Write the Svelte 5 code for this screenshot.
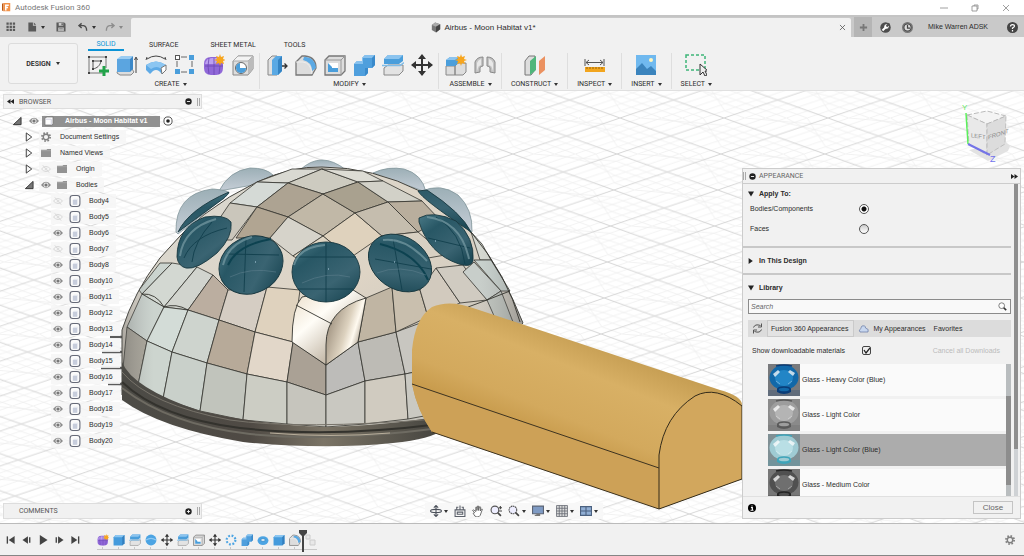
<script>
  const bodies = [
    ['Body4', false], ['Body5', false], ['Body6', true], ['Body7', false], ['Body8', true],
    ['Body10', true], ['Body11', true], ['Body12', true], ['Body13', true], ['Body14', true],
    ['Body15', true], ['Body16', true], ['Body17', true], ['Body18', true], ['Body19', true], ['Body20', true]
  ];
  const tabs = ['SOLID', 'SURFACE', 'SHEET METAL', 'TOOLS'];
  const groups = [
    { label: 'CREATE', icons: ['sketch', 'extrude', 'revolve', 'pattern', 'form', 'hole'] },
    { label: 'MODIFY', icons: ['press', 'fillet', 'shell', 'combine', 'split', 'move'] },
    { label: 'ASSEMBLE', icons: ['component', 'joint'] },
    { label: 'CONSTRUCT', icons: ['plane'], wide: true },
    { label: 'INSPECT', icons: ['measure'], wide: true },
    { label: 'INSERT', icons: ['image'], wide: true },
    { label: 'SELECT', icons: ['select'], wide: true }
  ];
  const history = ['form', 'box', 'split', 'sphere', 'move', 'split', 'shell', 'move', 'circular', 'combine', 'torus', 'box', 'fillet'];
  const playback = ['first', 'back', 'play', 'forward', 'last'];
  const materials = [
    { name: 'Glass - Heavy Color (Blue)', bg: '#77797c', body: '#1268a8', shade: '#0a3d78', light: '#2285c6' },
    { name: 'Glass - Light Color', bg: '#8a8a8a', body: '#9d9d9d', shade: '#5a5a5a', light: '#b4b4b4' },
    { name: 'Glass - Light Color (Blue)', bg: '#7f8f94', body: '#9fcbd3', shade: '#3fa5ba', light: '#b9dfe5', selected: true },
    { name: 'Glass - Medium Color', bg: '#777', body: '#505050', shade: '#252525', light: '#6f6f6f' }
  ];
  let target = $state('bodies');
  let downloadable = $state(true);

  const faces = [
    ['#d9d9d2', '257,182 292,169 322,169 288,183'],
    ['#cdcbc0', '288,183 322,169 358,182 323,194'],
    ['#dddcd4', '322,169 363,171 383,181 358,182'],
    ['#d5dad6', '257,182 288,183 257,207 230,203'],
    ['#ada392', '288,183 323,194 288,217 257,207'],
    ['#c1b8a7', '323,194 355,213 323,236 288,217'],
    ['#a9a18f', '358,182 388,202 355,213 323,194'],
    ['#d2d1c8', '358,182 383,181 422,201 388,202'],
    ['#cac6bb', '257,207 230,203 205,240 232,240'],
    ['#b1a592', '257,207 288,217 270,238 236,238'],
    ['#d6d3ca', '288,217 323,236 293,256 270,238'],
    ['#dfd2bd', '355,213 323,236 350,258 382,236'],
    ['#c5bdae', '388,202 355,213 382,236 418,232'],
    ['#b9ae9d', '388,202 422,201 440,220 418,232'],
    ['#dfd5c3', '323,236 293,256 326,275 350,258'],
    ['#d8d0c2', '418,232 382,236 400,263 445,255'],
    ['#d5d8d1', '471,232 480,260 491,260 482,244'],
    ['#c8d1cd', '491,260 510,291 501,291 474,260'],
    ['#cbd4cf', '160,263 172,263 142,294 139,290'],
    ['#d3d8d2', '172,263 197,267 164,307 142,294'],
    ['#d1d4ce', '197,267 213,275 188,310 164,307'],
    ['#bbaea0', '213,275 228,290 219,320 188,310'],
    ['#d5cdc3', '228,290 267,287 255,332 219,320'],
    ['#dfd2be', '267,287 300,290 293,342 255,332'],
    ['#cbd3ce', '142,294 164,307 147,341 127,327'],
    ['#d3dcd7', '164,307 188,310 172,352 147,341'],
    ['#ced4ce', '188,310 219,320 207,363 172,352'],
    ['#b7aa99', '219,320 255,332 247,374 207,363'],
    ['#e2d7c9', '255,332 293,342 287,382 247,374'],
    ['#aaa195', '293,342 326,365 326,395 287,382'],
    ['#bdbcb9', '326,365 358,342 365,381 326,395'],
    ['#bdbbb5', '358,342 396,332 405,374 365,381'],
    ['#c8c6c0', '396,332 423,322 415,372 405,374'],
    ['#c0b5a3', '366,298 392,287 396,332 358,342'],
    ['#c9bfae', '392,287 420,290 428,317 396,332'],
    ['#d2cabe', '420,290 436,268 460,303 428,317'],
    ['#d0cbc1', '436,268 463,265 487,300 460,303'],
    ['#c8ceca', '474,262 501,291 487,300 463,272'],
    ['#bfc4be', '501,291 513,322 495,318 487,300'],
    ['#aaa69b', '127,327 147,341 138,385 123,368'],
    ['#cdd5cf', '147,341 172,352 163,399 138,385'],
    ['#c9d0ca', '172,352 207,363 200,411 163,399'],
    ['#c1c4bc', '207,363 247,374 243,420 200,411'],
    ['#cccdc4', '247,374 287,382 287,424 243,420'],
    ['#c6c5bd', '287,382 326,395 326,427 287,424'],
    ['#c9c8c1', '326,395 365,381 365,424 326,427'],
    ['#d0cbc0', '365,381 405,374 408,419 365,424'],
    ['#cac9c2', '405,374 415,372 424,416 408,419']
  ];
</script>

{#snippet icon(name)}
  <svg class="ico" viewBox="0 0 22 22" aria-hidden="true">
    {#if name === 'sketch'}
      <path d="M2 3v16h14M2 3h17v11" fill="none" stroke="#777" />
      <path d="M6 15V7h8c-1 5-4 7-8 8z" fill="none" stroke="#555" />
      <path d="M1 2h2v2H1zM18 2h2v2h-2zM1 18h2v2H1zM5 6h2v2H5zM5 14h2v2H5zM13 6h2v2h-2z" fill="#444" />
      <path d="M15.500 12h3v3.500H22v3h-3.500V22h-3v-3.500H12v-3h3.500z" fill="#22a34a" />
    {:else if name === 'extrude'}
      <path d="M1 19l3 2h11l3-3-2-3H2z" fill="#ddd" stroke="#888" /><path d="M1 5v13h13V5z" fill="#5ba5e0" /><path d="M1 5l4-3h12l-3 3z" fill="#9accf2" /><path d="M14 5l3-3v13l-3 3z" fill="#3c88c8" /><path d="M20 19V4M18.500 6L20 3l1.500 3" stroke="#444" fill="none" />
    {:else if name === 'revolve'}
      <path d="M2 5Q11-1 20 5M1 6l1-3M21 6l-1-3" fill="none" stroke="#444" /><path d="M1 11q10-7 20 0v5l-4 4-3-3q-3-2-6 0l-3 3-4-4z" fill="#5eaae6" /><path d="M1 11q10-7 20 0l-5 4q-4-4-10 0z" fill="#8cc6f2" /><path d="M16 14l5-3v5l-4 4z" fill="#fff" stroke="#777" />
    {:else if name === 'pattern'}
      <path d="M7 3h6M3 7v6M18 7v6M7 18h6" fill="none" stroke="#666" /><rect x="1.500" y="1.500" width="4" height="4" fill="#fff" stroke="#555" /><path d="M15 1h5v5h-5zM1 15h5v5H1zM15 15h5v5h-5z" fill="#4a9edb" />
    {:else if name === 'form'}
      <path d="M1 10q0-7 7-7h6q6 0 6 7v4q0 7-7 7H8q-7 0-7-7z" fill="#9068d8" /><path d="M2 10q1-6 7-6h5q3 1 0 4l-2 2z" fill="#bca0f0" /><path d="M11 4v17M2 12h18M6 4q-2 8 0 16M16 4q2 8 0 16" fill="none" stroke="#6b46b2" stroke-width=".8" />
      <path d="M17 0l1 3 3-1-1 3 3 1-3 1 1 3-3-1-1 3-1-3-3 1 1-3-3-1 3-1-1-3 3 1z" fill="#f7a51d" />
    {:else if name === 'hole'}
      <path d="M1 7l5-5h15v13l-5 6H1z" fill="#ddd" stroke="#888" /><path d="M1 7l5-5h15l-5 5z" fill="#f3f3f3" stroke="#aaa" /><path d="M16 7l5-5v13l-5 6z" fill="#bbb" /><circle cx="9" cy="14" r="5.500" fill="#fff" stroke="#666" /><path d="M8 9v5h6a5 5 0 1 1-6-5z" fill="#4a9edb" />
    {:else if name === 'press'}
      <path d="M2 6l4-4h5v19H2z" fill="#e0e0e0" stroke="#888" /><path d="M6 6l4-4h6v15l-4 4H6z" fill="#5aa9e4" /><path d="M12 6l4-4v15l-4 4z" fill="#3484c4" /><path d="M16 12h5M18.500 9.500L21 12l-2.500 2.500" fill="none" stroke="#333" stroke-width="1.300" />
    {:else if name === 'fillet'}
      <path d="M1 8l6-6h3q11 1 11 12l-4 7H1z" fill="#ddd" stroke="#777" stroke-width="1.300" /><path d="M9 3h2q9 1 10 11l-4 3Q17 8 8 6z" fill="#5aa9e4" /><path d="M1 8h7q8 1 9 12" fill="none" stroke="#eee" />
    {:else if name === 'shell'}
      <path d="M1 6l4-4h16v15l-4 4H1z" fill="#ddd" stroke="#777" stroke-width="1.300" /><path d="M1 6h16v15M17 6l4-4" fill="none" stroke="#999" /><path d="M4 9h10v9H4z" fill="#fff" /><path d="M4 9l4 4v1h6v4H4z" fill="#4a9edb" />
    {:else if name === 'combine'}
      <path d="M1 10l3-3h5V4l3-3h10v10l-3 3h-4v5l-3 3H1z" fill="#4f9fdd" /><path d="M1 10l3-3h5V4l3-3h10l-3 3h-9v6z" fill="#87c1ee" /><path d="M19 4l3-3v10l-3 3zM12 14h3v5l-3 3z" fill="#3a8acb" />
    {:else if name === 'split'}
      <path d="M2 14l4-3h15v6l-4 4H2z" fill="#e3e3e3" stroke="#888" /><path d="M2 5l4-4h15v6l-4 3H2z" fill="#4a9edb" /><path d="M2 5l4-4h15l-4 4z" fill="#8cc4ef" /><path d="M0 11.500h18l4-3" fill="none" stroke="#80bde8" stroke-width="1.500" />
    {:else if name === 'move'}
      <path d="M11 1v20M1 11h20" stroke="#333" stroke-width="2" /><path d="M11 0l4 5H7zM11 22l4-5H7zM0 11l5-4v8zM22 11l-5-4v8z" fill="#333" />
    {:else if name === 'component'}
      <path d="M1 12h9v9H1zM10 12l3-3h8v9l-3 3h-8z" fill="#ddd" stroke="#888" /><path d="M1 6l4-3h9v6l-4 3H1z" fill="#4a9edb" /><path d="M1 6l4-3h9l-4 3z" fill="#8cc4ef" /><path d="M16 0l1 3 3-1-1 3 3 1-3 1 1 3-3-1-1 3-1-3-3 1 1-3-3-1 3-1-1-3 3 1z" fill="#f7a51d" />
    {:else if name === 'joint'}
      <path d="M1 19V8q2-5 8-5v9q-3 0-3 2v4zM21 19V8q-2-5-8-5v9q3 0 3 2v4z" fill="#c4c4c4" stroke="#888" /><path d="M3 17V9q1-3 4-4v6q-3 1-3 3zM19 17V9q-1-3-4-4v6q3 1 3 3z" fill="#e8e8e8" />
    {:else if name === 'plane'}
      <path d="M1 7l4-5h6v14l-4 5H1z" fill="#ddd" stroke="#777" /><path d="M6 7l6-5v14l-6 5z" fill="#4fb67b" /><path d="M15 7l6-5v14l-6 5z" fill="#eb9160" />
    {:else if name === 'measure'}
      <path d="M1 5v7M20 5v7M2 8.500h17M5 6L2 8.500 5 11M16 6l3 2.500L16 11" fill="none" stroke="#555" /><path d="M1 13h20v5H1z" fill="#f2a51e" /><path d="M3 13v2M6 13v2M9 13v2M12 13v2M15 13v2M18 13v2" stroke="#9a6407" />
    {:else if name === 'image'}
      <path d="M1 1h20v20H1z" fill="#70b9ef" /><path d="M1 15l6-6 5 6 4-3 5 5v4H1z" fill="#3b84bd" /><circle cx="16" cy="6" r="2" fill="#fff6bd" />
    {:else if name === 'select'}
      <path d="M1 1h19v15H1z" fill="none" stroke="#3eb578" stroke-width="1.500" stroke-dasharray="3 2" /><path d="M15 10v11l3-3 2 4 2-1-2-4h3z" fill="#eee" stroke="#333" />
    {:else if name === 'box'}
      <path d="M1 6l4-4h16v15l-4 4H1z" fill="#459bdc" /><path d="M1 6l4-4h16l-4 4z" fill="#8cc6f1" /><path d="M17 6l4-4v15l-4 4z" fill="#347fbe" />
    {:else if name === 'sphere'}
      <circle cx="11" cy="11" r="10" fill="#4ca4e3" /><path d="M2 11Q11 5 20 11" fill="none" stroke="#8fc9f3" stroke-width="2" />
    {:else if name === 'circular'}
      <circle cx="11" cy="11" r="8" fill="none" stroke="#4ca4e3" stroke-width="4" stroke-dasharray="3.300 3" />
    {:else if name === 'torus'}
      <ellipse cx="11" cy="12" rx="10" ry="8" fill="#4ca4e3" /><ellipse cx="11" cy="11" rx="4" ry="2.500" fill="#e6f2fa" stroke="#277ab7" />
    {:else if name === 'first'}
      <path d="M3 3v16" stroke="#444" stroke-width="3" /><path d="M19 2v18L6 11z" fill="#444" />
    {:else if name === 'last'}
      <path d="M19 3v16" stroke="#444" stroke-width="3" /><path d="M3 2v18l13-9z" fill="#444" />
    {:else if name === 'back'}
      <path d="M13 3v16L1 11z" fill="#444" /><path d="M17 5v12" stroke="#444" stroke-width="3" />
    {:else if name === 'forward'}
      <path d="M9 3v16l12-8z" fill="#444" /><path d="M5 5v12" stroke="#444" stroke-width="3" />
    {:else if name === 'play'}
      <path d="M4 0v22l17-11z" fill="#444" />
    {:else if name === 'eye'}
      <path d="M0 11Q11-3 22 11Q11 25 0 11z" fill="#8a8a8a" /><circle cx="11" cy="11" r="5.500" fill="#e8e8e8" /><circle cx="11" cy="11" r="3.500" fill="#777" />
    {:else if name === 'hidden'}
      <path d="M1 11Q11 0 21 11Q11 22 1 11zM4 3l14 16" fill="none" stroke="#d5d5d5" stroke-width="2" /><circle cx="11" cy="11" r="3" fill="#ddd" />
    {:else if name === 'folder'}
      <path d="M0 4h12l2-2h8v18H0z" fill="#929292" /><path d="M0 6h22" stroke="#bbb" />
    {:else if name === 'body'}
      <rect x="2" y="1" width="18" height="20" rx="5" fill="#fbfbfb" stroke="#666a78" stroke-width="2" /><path d="M7 9h8v9H7z" fill="#c7cddc" /><path d="M7 9l2-2h7v9l-1 2V9z" fill="#e4e7ef" />
    {:else if name === 'cube'}
      <path d="M2 6q0-4 5-4h13v14q0 4-4 4H2z" fill="#fff" stroke="#777" stroke-width="2" /><path d="M3 7h13v13" fill="none" stroke="#ccd" stroke-width="2" />
    {:else if name === 'gear'}
      <circle cx="11" cy="11" r="6" fill="none" stroke="#808080" stroke-width="3" /><circle cx="11" cy="11" r="9" fill="none" stroke="#808080" stroke-width="4" stroke-dasharray="3.500 3.570" />
    {:else if name === 'closed'}
      <path d="M5 2v18l12-9z" fill="#f8f8f8" stroke="#333" stroke-width="2" />
    {:else if name === 'open'}
      <path d="M20 3v16H3z" fill="#777" stroke="#333" stroke-width="2" />
    {:else if name === 'minus'}
      <circle cx="11" cy="11" r="10" fill="#222" /><path d="M6 11h10" stroke="#eee" stroke-width="3" />
    {:else if name === 'plus'}
      <circle cx="11" cy="11" r="10" fill="#222" /><path d="M6 11h10M11 6v10" stroke="#eee" stroke-width="3" />
    {:else if name === 'info'}
      <circle cx="11" cy="11" r="11" fill="#000" /><path d="M11 4v3M8 10h4v6M7 17h8" fill="none" stroke="#fff" stroke-width="3" />
    {:else if name === 'rewind'}
      <path d="M11 3v16L0 11zM22 3v16l-11-8z" fill="#222" />
    {:else if name === 'fast'}
      <path d="M11 3v16l11-8zM0 3v16l11-8z" fill="#222" />
    {:else if name === 'apps'}
      <path d="M1 1h5v5H1zM8 1h5v5H8zM15 1h5v5h-5zM1 8h5v5H1zM8 8h5v5H8zM15 8h5v5h-5zM1 15h5v5H1zM8 15h5v5H8zM15 15h5v5h-5z" fill="#5a5a5a" />
    {:else if name === 'file'}
      <path d="M3 1h10v7h7v13H3zM15 1l5 5h-5z" fill="#5a5a5a" />
    {:else if name === 'save'}
      <path d="M1 1h17l3 3v17H1z" fill="#5a5a5a" /><path d="M6 2h10v6H6zM5 12h12v8H5z" fill="#ccc" /><path d="M12 3h3v4h-3zM7 14h8v1H7zM7 17h8v1H7z" fill="#5a5a5a" />
    {:else if name === 'undo' || name === 'redo'}
      <path transform={name === 'redo' ? 'matrix(-1 0 0 1 22 0)' : undefined} d="M8 3L2 8l6 5M3 8h9q7 1 7 11" fill="none" stroke-width="3" stroke={name === 'redo' ? '#8d8d8d' : '#4c4c4c'} />
    {:else if name === 'tools'}
      <circle cx="11" cy="11" r="10.500" fill="#4d4d4d" /><path d="M5 17l7-7" stroke="#fff" stroke-width="4" /><circle cx="13" cy="9" r="4.500" fill="#fff" /><path d="M13 9l6-6" stroke="#4d4d4d" stroke-width="4" />
    {:else if name === 'clock'}
      <circle cx="11" cy="11" r="9.500" fill="#4d4d4d" stroke="#777" stroke-width="3" /><circle cx="11" cy="11" r="6" fill="#ddd" /><path d="M11 6v6h5" fill="none" stroke="#444" stroke-width="2.500" />
    {:else if name === 'help'}
      <circle cx="11" cy="11" r="11" fill="#444" /><path d="M7 9q0-4 4-4t4 3q0 2-4 4v2M11 16v3" fill="none" stroke="#fff" stroke-width="2.500" />
    {:else if name === 'cross'}
      <path d="M3 3l16 16M19 3L3 19" stroke="#555" stroke-width="2.500" />
    {:else if name === 'orbit'}
      <path d="M11 1v20M7 5l4-4 4 4M7 17l4 4 4-4" fill="none" stroke="#4b505a" stroke-width="2" /><ellipse cx="11" cy="11" rx="10" ry="3" fill="none" stroke="#4b505a" stroke-width="2" />
    {:else if name === 'look'}
      <path d="M2 9h18v12H2zM6 13h10v4H6zM5 8V4h3M17 8V4h-3M11 1v7" fill="none" stroke="#5b606a" stroke-width="2" />
    {:else if name === 'hand'}
      <path d="M5 14l-4-4 2-1 4 3V4h2v6l1-8h2v8l2-7 2 1-1 7 3-4 1 1-4 11q-1 3-6 3-4 0-7-7z" fill="#fff" stroke="#555" stroke-width="1.500" />
    {:else if name === 'zoom' || name === 'fit'}
      <circle cx="9" cy="9" r="7" fill="#eef" stroke="#555" stroke-width="2" stroke-dasharray={name === 'fit' ? '3 1' : undefined} /><path d="M14 14l6 6" stroke="#444" stroke-width="3" />{#if name === 'zoom'}<path d="M19 2v6M16 5h6M16 11h6" stroke="#444" stroke-width="2" />{/if}
    {:else if name === 'display'}
      <path d="M1 2h20v14H1z" fill="#7f9bc4" stroke="#5b6475" stroke-width="2" /><path d="M8 16h7v4H5v-2h3z" fill="#777" />
    {:else if name === 'grid'}
      <path d="M1 1h20v20H1z" fill="#ddd" /><path d="M1 1h20v20H1zM6 1v20M11 1v20M16 1v20M1 6h20M1 11h20M1 16h20" fill="none" stroke="#686c75" stroke-width="1.500" />
    {:else if name === 'views'}
      <path d="M1 3h20v16H1z" fill="#91afd5" stroke="#4b6180" stroke-width="2" /><path d="M11 3v16M1 11h20" stroke="#4b6180" stroke-width="2" />
    {:else if name === 'refresh'}
      <path d="M3 9q3-8 14-4M19 13q-3 8-14 4M19 1v7h-7M3 21v-7h7" fill="none" stroke="#555" stroke-width="2" />
    {:else if name === 'cloud'}
      <path d="M4 18q-4-4 2-7 0-7 7-5 2 0 2 4 8 2 5 8z" fill="#c8d7ef" stroke="#6b7ca5" stroke-width="1.500" />
    {:else if name === 'search'}
      <circle cx="9" cy="9" r="7" fill="#fff" stroke="#666" stroke-width="2" /><path d="M14 14l6 6" stroke="#333" stroke-width="4" />
    {/if}
  </svg>
{/snippet}

<div class="app">
  <header class="title">
    <svg class="logo" viewBox="0 0 12 12" aria-hidden="true"><path d="M0 1l2-1v11l-2-1z" fill="#b85818" /><path d="M2 0h9v11H2z" fill="#f3934a" /><path d="M4 2h5v2H6v1h2v2H6v3H4z" fill="#fff" /></svg>
    <span>Autodesk Fusion 360</span>
    <div class="winctl">
      <button aria-label="Minimize"><svg viewBox="0 0 8 8"><path d="M0 4h8" /></svg></button>
      <button aria-label="Restore"><svg viewBox="0 0 8 8"><path d="M1 2h5v5H1zM3 2V1h4v4H6" /></svg></button>
      <button aria-label="Close window"><svg viewBox="0 0 8 8"><path d="M1 1l6 6M7 1L1 7" /></svg></button>
    </div>
  </header>

  <div class="docbar">
    <nav class="quick">
      <button aria-label="Data panel">{@render icon('apps')}</button>
      <button aria-label="File">{@render icon('file')}<i class="caret"></i></button>
      <button aria-label="Save">{@render icon('save')}</button>
      <button aria-label="Undo">{@render icon('undo')}<i class="caret"></i></button>
      <button aria-label="Redo">{@render icon('redo')}<i class="caret dim"></i></button>
    </nav>
    <div class="doctab">
      <svg class="docicon" viewBox="0 0 12 12" aria-hidden="true"><path d="M1 3l4-3 6 2v6l-5 4-5-3z" fill="#777" /><path d="M1 3l5 2 5-3-6-2z" fill="#aaa" /><path d="M6 5l5-3v6l-5 4z" fill="#444" /></svg>
      <span>Airbus - Moon Habitat v1*</span>
      <button aria-label="Close document">{@render icon('cross')}</button>
    </div>
    <button class="add" aria-label="New document"><svg viewBox="0 0 10 10"><path d="M5 1v8M1 5h8" stroke="#777" stroke-width="2" /></svg></button>
    <div class="account">
      <button aria-label="Extensions">{@render icon('tools')}</button>
      <button aria-label="Job status">{@render icon('clock')}</button>
      <button class="user">Mike Warren ADSK</button>
      <button aria-label="Help">{@render icon('help')}</button>
    </div>
  </div>

  <section class="ribbon">
    <button class="design">DESIGN <i class="caret"></i></button>
    <div class="tools">
      <nav class="tabs">
        {#each tabs as tab, i}<button class:active={i === 0}>{tab}</button>{/each}
      </nav>
      <div class="groups">
        {#each groups as group}
          <div class="group" class:wide={group.wide}>
            <div class="icons">
              {#each group.icons as name}<button aria-label={name}>{@render icon(name)}</button>{/each}
            </div>
            <button class="menu">{group.label} <i class="caret"></i></button>
          </div>
        {/each}
      </div>
    </div>
  </section>

  <main class="viewport">
    <svg class="scene" viewBox="0 91 1024 432" preserveAspectRatio="xMidYMid slice" aria-hidden="true">
      <defs>
        <pattern id="floor" width="104" height="36" patternUnits="userSpaceOnUse" patternTransform="translate(828 118) skewX(-5)">
          <path d="M0 7.200L20.800 0M0 14.400L41.600 0M0 21.600L62.400 0M0 28.800L83.200 0M104 7.200L20.800 36M104 14.400L41.600 36M104 21.600L62.400 36M104 28.800L83.200 36M0 28.800L20.800 36M0 21.600L41.600 36M0 14.400L62.400 36M0 7.200L83.200 36M104 28.800L83.200 0M104 21.600L62.400 0M104 14.400L41.600 0M104 7.200L20.800 0" stroke="#ededed" stroke-width=".7" />
          <path d="M0 0L104 36M104 0L0 36" stroke="#cbcbcb" stroke-width=".8" />
        </pattern>
        <linearGradient id="dome" x2="1" y2="1"><stop stop-color="#d8d9d3" /><stop offset=".5" stop-color="#ded4c5" /><stop offset="1" stop-color="#b9bbb6" /></linearGradient>
        <linearGradient id="shade" x1="122" x2="520" gradientUnits="userSpaceOnUse"><stop stop-color="#555" stop-opacity=".35" /><stop offset=".08" stop-color="#999" stop-opacity="0" /><stop offset=".9" stop-color="#999" stop-opacity="0" /><stop offset="1" stop-color="#555" stop-opacity=".35" /></linearGradient>
        <linearGradient id="ring" x1="122" x2="442" gradientUnits="userSpaceOnUse"><stop stop-color="#4c4b46" /><stop offset=".4" stop-color="#4f4a44" /><stop offset=".63" stop-color="#7b7466" /><stop offset="1" stop-color="#44433e" /></linearGradient>
        <linearGradient id="glass" x2=".8" y2="1"><stop stop-color="#4b7a87" /><stop offset=".3" stop-color="#285765" /><stop offset=".7" stop-color="#3a6472" /><stop offset="1" stop-color="#1d4956" /></linearGradient>
        <linearGradient id="bubble" x2="0" y2="1"><stop stop-color="#9cafb6" /><stop offset="1" stop-color="#c6ced7" /></linearGradient>
        <linearGradient id="tube" x1="590" y1="340" x2="550" y2="440" gradientUnits="userSpaceOnUse"><stop stop-color="#c69e53" /><stop offset=".3" stop-color="#d8b065" /><stop offset=".75" stop-color="#d3a95d" /><stop offset="1" stop-color="#c79a4b" /></linearGradient>
        <linearGradient id="nl" x1="292" x2="336" y1="300" y2="350" gradientUnits="userSpaceOnUse"><stop stop-color="#eee3d1" /><stop offset=".45" stop-color="#fffdf7" /><stop offset="1" stop-color="#c7bcac" /></linearGradient>
        <linearGradient id="nr" x1="330" x2="362" y1="325" y2="335" gradientUnits="userSpaceOnUse"><stop stop-color="#a89b89" /><stop offset=".5" stop-color="#ddd2bf" /><stop offset=".75" stop-color="#fffaf0" /><stop offset="1" stop-color="#b5a998" /></linearGradient>
      </defs>
      <rect x="-400" y="-200" width="1900" height="1100" fill="#fff" />
      <rect x="-400" y="-200" width="1900" height="1100" fill="url(#floor)" />

      <g stroke="#5b5b5b" stroke-width="2.500"><path d="M110 337h14M102 352h22M101 368h22M108 384h16" /></g>
      <g fill="url(#bubble)" stroke="#82959b" stroke-width=".8">
        <path d="M300 170Q321 150 346 170z" />
        <path d="M219 191Q229 171 250 168q16 0 23 7l-20 10z" />
        <path d="M373 173q15-7 31-4 18 5 22 23z" />
        <path d="M176 232q-1-38 36-43 16 1 17 4-21 18-51 41z" />
        <path d="M420 192q20-10 38 3 15 14 14 37z" />
      </g>

      <path d="M122 395V330Q134 292 160 258 200 209 257 182 292 166 322 167 373 167 422 192 484 225 523 323L430 424Q324 450 122 395z" fill="url(#dome)" stroke="#44443f" />
      <g stroke="#34342f" stroke-width=".8" stroke-linejoin="round">
        {#each faces as [fill, points]}<polygon {fill} {points} />{/each}
      </g>
      <path d="M122 395V330Q134 292 160 258 200 209 257 182 292 166 322 167 373 167 422 192 484 225 523 323L430 424Q324 450 122 395z" fill="url(#shade)" />
      <g stroke="#34342f" stroke-width=".9">
        <path d="M302 297Q292 307 292 342L326 365 332 323 366 298 350 288z" fill="url(#nl)" />
        <path d="M366 298Q326 309 326 345V365L358 342z" fill="url(#nr)" />
        <path d="M296 305l36 19M142 294q14-1 22 13 12-4 24 3M510 291l-23 9-19 7M471 232q37 44 49 90" fill="none" />
      </g>
      <path d="M122 362Q132 388 200 411 260 425 326 427 390 425 434 417L442 430Q432 439 393 443 323 450 243 442 160 428 122 400z" fill="url(#ring)" />
      <path d="M122 372Q150 405 230 420 300 430 436 419" fill="none" stroke="#77736a" />
      <path d="M122 382Q160 418 240 428 330 438 440 424" fill="none" stroke="#33322d" stroke-width="2" />
      <path d="M122 388Q170 425 250 434 330 442 440 428" fill="none" stroke="#6e6b62" stroke-width="2" />
      <path d="M270 433q60 5 120 0" fill="none" stroke="#b8ae9b" />

      <g fill="url(#glass)" stroke="#193840" stroke-width=".9">
        <path d="M229 192q-1 4-13 12L178 232q11-23 51-40zM418 191q4 8 53 41-9-19-44-42z" />
        <path d="M177 257q0-30 28-40 20-3 26 5 2 15-14 31-20 17-31 15-8-2-9-11z" />
        <ellipse cx="251" cy="265" rx="33" ry="28" transform="rotate(-28 251 265)" />
        <ellipse cx="326" cy="272" rx="34" ry="30" />
        <ellipse cx="400" cy="263" rx="34" ry="26" transform="rotate(35 400 263)" />
        <path d="M419 218q14-8 37 3 19 17 17 40-2 7-14 3-30-10-40-42z" />
      </g>
      <g fill="none" stroke="#123f4d" stroke-width=".9">
        <path d="M184 258q9-22 43-30M192 262q2-20 20-40M226 254l53 1M246 238l-2 54M296 257h60M298 289h55M326 243v59M375 259l56 10M393 239q4 22 9 51M428 238l42 10M436 217q25 15 29 47" />
        <path d="M228 265q9-20 43-26M380 244q37 9 48 36" stroke="#0d4250" stroke-width="2" />
      </g>
      <g fill="none" stroke="#789ba4" stroke-width="2" opacity=".7"><path d="M180 256q4-28 36-37M223 265q5-21 29-28M294 265q5-18 31-20M383 240q22-3 44 21M427 217q34 4 42 42" /></g>
      <g fill="none" stroke="#638391" opacity=".5"><path d="M230 277q20-10 46-5M302 283q25-12 48-6M377 273q22-9 49 2" /></g>
      <path d="M255 262h1M328 269h1M394 262h1M435 241h1" stroke="#b7d5e6" />

      <path d="M412 384V350Q415 318 432 307 450 299 476 309L720 390Q742 396 742 405V479L659 509 432 432Q417 410 412 384z" fill="url(#tube)" />
      <path d="M412 384L659 468V509L432 432Q417 410 412 384z" fill="#cda157" />
      <path d="M659 509V455Q664 416 695 396 716 385 742 406V479z" fill="#d2a75d" stroke="#332b1a" />
      <path d="M412 384L659 468M432 432L659 509" fill="none" stroke="#3d3321" />
    </svg>

    <svg class="viewcube" viewBox="0 0 50 62" role="img" aria-label="View cube">
      <path d="M7 48l19 11 20-10 2-5-4-4z" fill="#e2e2e2" />
      <path d="M5 13L25 9l19 5-19 8z" fill="#f4f4f4" stroke="#aaa" stroke-width=".8" stroke-dasharray="5 2" />
      <path d="M5 13l20 9v31L7 42z" fill="#e9e9e9" stroke="#b5b5b5" stroke-width=".8" stroke-dasharray="5 2" />
      <path d="M25 22l19-8-1 28-18 11z" fill="#dcdcdc" stroke="#b5b5b5" stroke-width=".8" stroke-dasharray="5 2" />
      <text x="9" y="34" font-size="6" fill="#8c8c8c" transform="skewY(8)">LEFT</text><text x="26" y="46" font-size="6" fill="#8c8c8c" transform="skewY(-18)">FRONT</text>
      <path d="M4 11l2 31" stroke="#5cf05c" stroke-width="1.500" /><path d="M6 42l22 11" stroke="#7474e8" stroke-width="2" />
      <text x="0" y="8" font-size="8" fill="#63ed63">Y</text><text x="28" y="60" font-size="9" fill="#7171ed">Z</text>
    </svg>

    <aside class="browser">
      <header class="bar">{@render icon('rewind')}<span>BROWSER</span>{@render icon('minus')}<i class="grip"></i></header>
      <ul>
        <li class="root">{@render icon('open')}{@render icon('eye')}<span class="hl">{@render icon('cube')}<b>Airbus - Moon Habitat v1</b></span><svg class="ico dot" viewBox="0 0 22 22"><circle cx="11" cy="11" r="9" fill="#fff" stroke="#444" stroke-width="2" /><circle cx="11" cy="11" r="4" fill="#222" /></svg></li>
        <li class="l1">{@render icon('closed')}<span class="node">{@render icon('gear')}<em>Document Settings</em></span></li>
        <li class="l1">{@render icon('closed')}<span class="node">{@render icon('folder')}<em>Named Views</em></span></li>
        <li class="l1">{@render icon('closed')}<span class="node">{@render icon('hidden')}{@render icon('folder')}<em>Origin</em></span></li>
        <li class="l1">{@render icon('open')}<span class="node">{@render icon('eye')}{@render icon('folder')}<em>Bodies</em></span></li>
        {#each bodies as [name, visible]}
          <li class="l2"><span class="node">{@render icon(visible ? 'eye' : 'hidden')}{@render icon('body')}<em>{name}</em></span></li>
        {/each}
      </ul>
    </aside>

    <div class="bar comments"><span>COMMENTS</span>{@render icon('plus')}<i class="grip"></i></div>

    <nav class="navbar">
      {#each ['orbit', 'look', 'hand', 'zoom', 'fit', 'display', 'grid', 'views'] as name}
        <button aria-label={name}>{@render icon(name)}{#if !['look', 'hand', 'zoom'].includes(name)}<i class="caret"></i>{/if}</button>
      {/each}
    </nav>

    <aside class="appearance">
      <header><i class="grip"></i>{@render icon('minus')}<span>APPEARANCE</span>{@render icon('fast')}</header>
      <div class="content">
        <section class="apply">
          <h2><i class="tri down"></i>Apply To:</h2>
          <div class="opt"><label for="to-bodies">Bodies/Components</label><input id="to-bodies" type="radio" value="bodies" bind:group={target} /></div>
          <div class="opt"><label for="to-faces">Faces</label><input id="to-faces" type="radio" value="faces" bind:group={target} /></div>
        </section>
        <section class="design-sec"><h2><i class="tri"></i>In This Design</h2></section>
        <section class="library">
          <h2><i class="tri down"></i>Library</h2>
          <div class="search"><input aria-label="Search" placeholder="Search" />{@render icon('search')}</div>
          <nav class="sources">
            <button aria-label="Refresh">{@render icon('refresh')}</button>
            <button class="current">Fusion 360 Appearances</button>
            <button>{@render icon('cloud')}My Appearances</button>
            <button>Favorites</button>
          </nav>
          <div class="show">
            <label for="downloadable">Show downloadable materials</label>
            <input id="downloadable" type="checkbox" bind:checked={downloadable} />
            <button disabled>Cancel all Downloads</button>
          </div>
          <div class="list">
            <ul>
              {#each materials as m}
                <li class:selected={m.selected}>
                  <svg viewBox="0 0 32 32" aria-hidden="true">
                    <path d="M0 0h32v32H0z" fill={m.bg} />
                    <path d="M0 26h32v6H0z" fill={m.shade} opacity=".2" />
                    <path d="M9 22h14v6q-7 4-14 0z" fill={m.shade} />
                    <ellipse cx="16" cy="13.500" rx="14.500" ry="12.500" fill={m.body} />
                    <ellipse cx="16" cy="14" rx="9" ry="8" fill={m.light} />
                    <path d="M8 2q8-2 16 0" stroke={m.shade} stroke-width="1.500" fill="none" />
                    <path d="M5 10l5-4 2 2-5 5zM22 6l5 3-2 3-5-4z" fill="#fff" opacity=".75" />
                    <path d="M8 17l4 3M24 17l-4 3" stroke="#fff" opacity=".35" />
                    <ellipse cx="16" cy="25.500" rx="6" ry="2.500" fill={m.body} stroke={m.shade} stroke-width="1.500" />
                  </svg>
                  <span>{m.name}</span>
                </li>
              {/each}
            </ul>
            <i class="thumb"></i>
          </div>
        </section>
        <i class="scroll"></i>
      </div>
      <footer>{@render icon('info')}<button>Close</button></footer>
    </aside>
  </main>

  <footer class="timeline">
    <nav class="play">{#each playback as name}<button aria-label={name}>{@render icon(name)}</button>{/each}</nav>
    <div class="history">
      {#each history as name}<button aria-label={name}>{@render icon(name)}</button>{/each}
      <span class="ghost"><svg viewBox="0 0 12 12"><path d="M1 1h4v4H1zM5 6h5v5H5z" fill="#e8e8e8" stroke="#ccc" /></svg></span>
      <svg class="marker" viewBox="0 0 8 22" aria-hidden="true"><path d="M0 0h8v3L5 6v16H3V6L0 3z" fill="#444" /></svg>
    </div>
    <button class="settings" aria-label="Timeline settings">{@render icon('gear')}</button>
  </footer>
</div>

<style>
  :global(body) { margin: 0; }
  .app { min-height: 100vh; display: flex; flex-direction: column; font: 7px/10px "Liberation Sans", Arial, sans-serif; color: #2c2c2c; background: #f1f1f1; box-sizing: border-box; border-bottom: 1px solid #858585; }
  .app * { box-sizing: border-box; }
  button { border: 0; padding: 0; margin: 0; background: none; font: inherit; color: inherit; display: flex; align-items: center; white-space: nowrap; }
  ul { list-style: none; margin: 0; padding: 0; }
  em { font-style: normal; }
  svg { display: block; flex: none; }
  .ico { width: 10px; height: 10px; }
  .caret { flex: none; border: 2px solid transparent; border-top: 3px solid #333; border-bottom: 0; }
  .caret.dim { border-top-color: #888; }

  .title { height: 15px; background: #fff; display: flex; align-items: center; gap: 4px; padding: 0 14px 0 2px; font: 8px/14px Roboto, sans-serif; color: #777; }
  .logo { width: 9px; height: 9px; }
  .winctl { margin-left: auto; display: flex; gap: 23px; }
  .winctl svg { width: 8px; height: 8px; fill: none; stroke: #888; stroke-width: .8; }

  .docbar { height: 22px; display: flex; background: #c9c9c9; border-top: 2px solid #c4c4c4; }
  .quick { width: 131px; display: flex; align-items: center; padding-left: 6px; gap: 11px; }
  .quick button { gap: 4px; }
  .quick button:nth-child(4) { margin-left: 1px; }
  .quick button:last-child { margin-left: -2px; }
  .doctab { flex: 1; background: #f1f1f1; border-radius: 2px 2px 0 0; display: flex; align-items: center; gap: 3px; font-size: 8px; padding-right: 5px; margin-top: 1px; }
  .docicon { width: 10px; height: 11px; margin-left: auto; }
  .doctab button { margin-left: auto; }
  .doctab .ico { width: 7px; height: 7px; }
  .add { width: 18px; margin-left: 3px; background: #b5b5b5; justify-content: center; }
  .add svg { width: 9px; height: 9px; }
  .account { width: 152px; display: flex; align-items: center; padding: 0 6px 0 8px; gap: 11px; }
  .account .ico { width: 11px; height: 11px; }
  .user { margin: 0 auto 0 4px; }

  .ribbon { height: 54px; display: flex; font-family: Roboto, sans-serif; border-bottom: 1px solid #e0e0e0; overflow: hidden; }
  .design { margin: 6px 3px 6px 8px; width: 70px; border: 1px solid #dcdcdc; border-radius: 3px; justify-content: center; gap: 5px; font-weight: 600; background: #f3f3f3; }
  .tools { display: flex; flex-direction: column; }
  .tabs { display: flex; padding: 2px 0 0 7px; height: 16px; gap: 22px; }
  .tabs button { height: 12px; }
  .tabs .active { color: #0b93d6; border-bottom: 2px solid #0b93d6; width: 36px; justify-content: center; }
  .tabs button:nth-child(2) { padding-left: 3px; padding-right: 10px; }
  .tabs button:nth-child(4) { padding-left: 6px; }
  .groups { display: flex; }
  .group { padding: 1px 5px 0 6px; border-right: 1px solid #dedede; display: flex; flex-direction: column; align-items: center; gap: 3px; height: 36px; }
  .group.wide { padding: 1px 9px 0 9px; }
  .group:last-child { border: 0; }
  .icons { display: flex; gap: 7px; }
  .icons .ico { width: 22px; height: 22px; }
  .menu { gap: 3px; }

  .viewport { flex: 1; position: relative; overflow: hidden; background: #fff; }
  .scene { position: absolute; inset: 0; width: 100%; height: 100%; }
  .viewcube { position: absolute; right: 12px; top: 11px; width: 50px; height: 62px; }

  .bar { width: 199px; height: 15px; background: #f1f1f1; border: 1px solid #ddd; display: flex; align-items: center; padding: 0 1px 0 3px; gap: 5px; font-family: Roboto, sans-serif; color: #555; }
  .bar .ico { width: 7px; height: 7px; }
  .bar span { margin-right: auto; }
  .grip { width: 3px; height: 8px; border: solid #aaa; border-width: 0 1px; flex: none; }
  .browser { position: absolute; left: 3px; top: 3px; }
  .browser ul { padding-top: 4px; }
  .browser li { height: 16px; display: flex; align-items: center; gap: 5px; }
  .node { height: 14px; display: flex; align-items: center; gap: 6px; background: rgb(246 246 246 / .85); padding: 0 7px 0 2px; }
  .node em { padding-left: 3px; }
  .root { padding-left: 9px; }
  .root > .ico { margin-right: 2px; }
  .root .dot { margin-left: -2px; }
  .hl { height: 11px; width: 118px; background: #919191; color: #fff; display: flex; align-items: center; gap: 11px; padding-left: 2px; margin-left: -4px; }
  .l1 { padding-left: 21px; }
  .l2 { padding-left: 48px; }
  .l2 .ico + .ico { width: 12px; height: 12px; }
  .l2 em { padding-left: 2px; }

  .comments { position: absolute; left: 3px; bottom: 4px; height: 16px; padding-left: 15px; }
  .navbar { position: absolute; left: 50%; bottom: 4px; height: 16px; display: flex; align-items: center; gap: 6px; background: rgb(247 247 247 / .9); padding: 0 5px; margin-left: -87px; }
  .navbar button { gap: 2px; }
  .navbar .ico { width: 12px; height: 12px; }

  .appearance { position: absolute; right: 3px; top: 77px; bottom: 4px; width: 279px; background: #f1f1f1; border: 1px solid #ccc; display: flex; flex-direction: column; }
  .appearance > header { height: 15px; border-bottom: 1px solid #ccc; display: flex; align-items: center; gap: 3px; padding-right: 2px; font-family: Roboto, sans-serif; color: #666; }
  .appearance > header span { margin-right: auto; }
  .appearance > header .ico { width: 7px; height: 7px; }
  .content { flex: 1; min-height: 0; position: relative; padding-right: 9px; display: flex; flex-direction: column; }
  .scroll { position: absolute; right: 2px; top: 0; bottom: 0; width: 4px; background: linear-gradient(#8e8e8e 265px, #cfd2d5 265px); }
  h2 { margin: 0; font-size: 7px; line-height: 10px; display: flex; align-items: center; gap: 5px; }
  .tri { width: 6px; height: 6px; background: #222; clip-path: polygon(10% 0, 80% 50%, 10% 100%); }
  .tri.down { clip-path: polygon(0 10%, 100% 10%, 50% 90%); }
  .apply, .design-sec { border-bottom: 2px solid #c8c8c8; padding-left: 5px; }
  .apply { height: 64px; padding-top: 5px; }
  .opt { height: 20px; display: flex; align-items: center; padding-left: 2px; }
  .opt label { width: 109px; }
  .opt input { appearance: none; width: 10px; height: 10px; margin: 0; border: 1px solid #555; border-radius: 50%; background: linear-gradient(#ccc, #fff); }
  .opt input:checked { background: radial-gradient(#111 0 2px, #fff 3px); }
  .design-sec { height: 27px; padding-top: 8px; }
  .library { flex: 1; min-height: 0; padding: 8px 0 0 5px; display: flex; flex-direction: column; }
  .search { height: 15px; margin: 6px 0; border: 1px solid #8b8b8b; background: #f9f9f9; display: flex; align-items: center; padding-right: 3px; flex: none; }
  .search input { flex: 1; min-width: 0; border: 0; background: none; font: italic 7px/10px "Liberation Sans", sans-serif; padding: 0 2px; outline: 0; }
  .search input::placeholder { color: #666; opacity: 1; }
  .search .ico { width: 9px; height: 9px; }
  .sources { display: flex; height: 17px; flex: none; background: #dcdcdc; gap: 4px; padding-left: 4px; }
  .sources button { gap: 4px; padding-right: 4px; }
  .sources .ico { width: 11px; height: 11px; }
  .sources .current { background: #e3e3e3; border: 1px solid #cacaca; padding: 0 5px 0 3px; margin-left: -4px; }
  .show { display: flex; align-items: center; height: 27px; flex: none; padding: 0 11px 0 4px; }
  .show label { width: 110px; }
  .show input { appearance: none; width: 9px; height: 9px; margin: 0; border: 1px solid #444; border-radius: 2px; background: #fff; }
  .show input:checked { background: url("data:image/svg+xml,%3Csvg xmlns='http://www.w3.org/2000/svg' viewBox='0 0 7 7'%3E%3Cpath d='M1 3l2 3 4-5' fill='none' stroke='%23222' stroke-width='1.3'/%3E%3C/svg%3E") #eee; }
  .show button { margin-left: auto; color: #bbb; }
  .list { flex: 1; min-height: 0; overflow: hidden; position: relative; padding: 0 5px 0 20px; background: linear-gradient(#b9bdbf, #b9bdbf) right / 5px 100% no-repeat; }
  .list ul { background: #f5f5f5; }
  .list li { height: 35px; display: flex; align-items: center; gap: 2px; border-bottom: 3px solid #f1f1f1; background: #fafafa; }
  .list li.selected { background: #acacac; }
  .list li > svg { width: 32px; height: 32px; }
  .thumb { position: absolute; right: 0; top: 32px; width: 5px; height: 89px; background: #8d8d8d; }
  .appearance > footer { height: 22px; flex: none; border-top: 1px solid #e0e0e0; display: flex; align-items: center; justify-content: space-between; padding: 0 7px 0 5px; }
  .appearance > footer .ico { width: 8px; height: 8px; }
  .appearance > footer button { width: 40px; height: 13px; justify-content: center; border: 1px solid #c4c4c4; font-size: 8px; color: #666; }

  .timeline { height: 32px; display: flex; align-items: center; padding: 0 9px 0 6px; border-top: 1px solid #bbb; }
  .play { display: flex; gap: 6px; width: 91px; flex: none; }
  .history { display: flex; position: relative; gap: 4px; padding-bottom: 3px; border-bottom: 1px solid #c8c8c8; margin-top: 5px; }
  .history .ico, .ghost svg { width: 12px; height: 12px; }
  .history button { position: relative; }
  .history button::after { content: ""; position: absolute; left: 5px; bottom: -4px; width: 1px; height: 3px; background: #c8c8c8; }
  .marker { position: absolute; width: 8px; height: 22px; right: 10px; bottom: -3px; }
  .settings { margin-left: auto; }
</style>
